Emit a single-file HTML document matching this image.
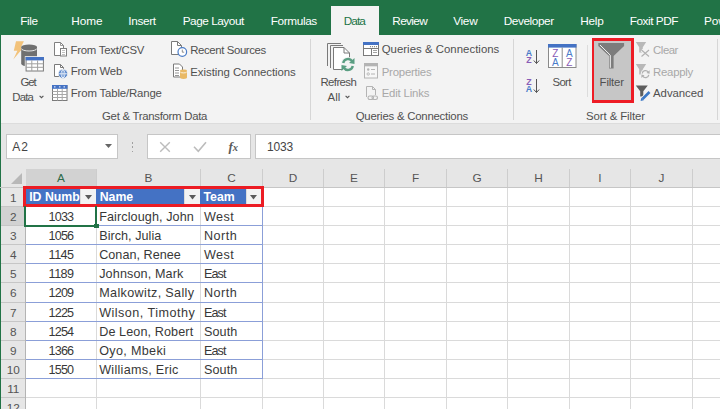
<!DOCTYPE html>
<html><head><meta charset="utf-8"><style>
html,body{margin:0;padding:0;width:720px;height:409px;overflow:hidden;background:#fff;}
body{position:relative;font-family:"Liberation Sans", sans-serif;}
body>div,body>svg{position:absolute;}
</style></head><body>
<div style="left:0px;top:0px;width:720px;height:35px;background:#217346;"></div>
<div style="left:331px;top:6px;width:48px;height:29px;background:#f3f3f3;"></div>
<div style="left:20.30px;top:16.00px;font-size:11.8px;line-height:11.8px;color:#fff;font-weight:normal;white-space:nowrap;letter-spacing:-0.437px;">File</div>
<div style="left:71.30px;top:16.00px;font-size:11.8px;line-height:11.8px;color:#fff;font-weight:normal;white-space:nowrap;letter-spacing:-0.094px;">Home</div>
<div style="left:128.30px;top:16.00px;font-size:11.8px;line-height:11.8px;color:#fff;font-weight:normal;white-space:nowrap;letter-spacing:-0.362px;">Insert</div>
<div style="left:182.70px;top:16.00px;font-size:11.8px;line-height:11.8px;color:#fff;font-weight:normal;white-space:nowrap;letter-spacing:-0.467px;">Page Layout</div>
<div style="left:270.70px;top:16.00px;font-size:11.8px;line-height:11.8px;color:#fff;font-weight:normal;white-space:nowrap;letter-spacing:-0.369px;">Formulas</div>
<div style="left:392.30px;top:16.00px;font-size:11.8px;line-height:11.8px;color:#fff;font-weight:normal;white-space:nowrap;letter-spacing:-0.666px;">Review</div>
<div style="left:453.20px;top:16.00px;font-size:11.8px;line-height:11.8px;color:#fff;font-weight:normal;white-space:nowrap;letter-spacing:-0.298px;">View</div>
<div style="left:503.70px;top:16.00px;font-size:11.8px;line-height:11.8px;color:#fff;font-weight:normal;white-space:nowrap;letter-spacing:-0.411px;">Developer</div>
<div style="left:580.20px;top:16.00px;font-size:11.8px;line-height:11.8px;color:#fff;font-weight:normal;white-space:nowrap;letter-spacing:-0.224px;">Help</div>
<div style="left:629.80px;top:16.00px;font-size:11.8px;line-height:11.8px;color:#fff;font-weight:normal;white-space:nowrap;letter-spacing:-0.481px;">Foxit PDF</div>
<div style="left:703.90px;top:16.00px;font-size:11.8px;line-height:11.8px;color:#fff;font-weight:normal;white-space:nowrap;">Pow</div>
<div style="left:343.80px;top:16.00px;font-size:11.8px;line-height:11.8px;color:#217346;font-weight:normal;white-space:nowrap;letter-spacing:-0.978px;">Data</div>
<div style="left:0px;top:35px;width:720px;height:88px;background:#f3f3f3;"></div>
<div style="left:0px;top:123px;width:720px;height:1px;background:#dcdcdc;"></div>
<div style="left:0px;top:124px;width:720px;height:63.5px;background:#e6e6e6;"></div>
<div style="left:0px;top:35px;width:1px;height:374px;background:#217346;"></div>
<div style="left:310px;top:39px;width:1px;height:80.5px;background:#d6d6d6;"></div>
<div style="left:513px;top:39px;width:1px;height:80.5px;background:#d6d6d6;"></div>
<div style="left:717px;top:39px;width:1px;height:80.5px;background:#d6d6d6;"></div>
<div style="left:587px;top:45px;width:1px;height:52px;background:#dcdcdc;"></div>
<div style="left:70.50px;top:45.00px;font-size:11.4px;line-height:11.4px;color:#505050;font-weight:normal;white-space:nowrap;letter-spacing:-0.265px;">From Text/CSV</div>
<div style="left:70.80px;top:66.00px;font-size:11.4px;line-height:11.4px;color:#505050;font-weight:normal;white-space:nowrap;letter-spacing:-0.214px;">From Web</div>
<div style="left:70.80px;top:88.00px;font-size:11.4px;line-height:11.4px;color:#505050;font-weight:normal;white-space:nowrap;letter-spacing:-0.158px;">From Table/Range</div>
<div style="left:190.30px;top:45.00px;font-size:11.4px;line-height:11.4px;color:#505050;font-weight:normal;white-space:nowrap;letter-spacing:-0.401px;">Recent Sources</div>
<div style="left:190.30px;top:67.00px;font-size:11.4px;line-height:11.4px;color:#505050;font-weight:normal;white-space:nowrap;letter-spacing:-0.045px;">Existing Connections</div>
<div style="left:20.50px;top:77.00px;font-size:11.4px;line-height:11.4px;color:#505050;font-weight:normal;white-space:nowrap;letter-spacing:-1.038px;">Get</div>
<div style="left:12.30px;top:92.00px;font-size:11.4px;line-height:11.4px;color:#505050;font-weight:normal;white-space:nowrap;letter-spacing:-0.829px;">Data</div>
<div style="left:102.00px;top:111.00px;font-size:11.4px;line-height:11.4px;color:#505050;font-weight:normal;white-space:nowrap;letter-spacing:-0.283px;">Get &amp; Transform Data</div>
<div style="left:320.50px;top:77.00px;font-size:11.4px;line-height:11.4px;color:#505050;font-weight:normal;white-space:nowrap;letter-spacing:-0.602px;">Refresh</div>
<div style="left:327.50px;top:92.00px;font-size:11.4px;line-height:11.4px;color:#505050;font-weight:normal;white-space:nowrap;letter-spacing:0.067px;">All</div>
<div style="left:381.70px;top:44.00px;font-size:11.4px;line-height:11.4px;color:#505050;font-weight:normal;white-space:nowrap;letter-spacing:0.024px;">Queries &amp; Connections</div>
<div style="left:381.70px;top:67.00px;font-size:11.4px;line-height:11.4px;color:#a8a8a8;font-weight:normal;white-space:nowrap;letter-spacing:-0.218px;">Properties</div>
<div style="left:381.70px;top:88.00px;font-size:11.4px;line-height:11.4px;color:#a8a8a8;font-weight:normal;white-space:nowrap;letter-spacing:-0.191px;">Edit Links</div>
<div style="left:355.70px;top:111.00px;font-size:11.4px;line-height:11.4px;color:#505050;font-weight:normal;white-space:nowrap;letter-spacing:-0.231px;">Queries &amp; Connections</div>
<div style="left:552.40px;top:77.00px;font-size:11.4px;line-height:11.4px;color:#505050;font-weight:normal;white-space:nowrap;letter-spacing:-0.603px;">Sort</div>
<div style="left:653.10px;top:45.00px;font-size:11.4px;line-height:11.4px;color:#a8a8a8;font-weight:normal;white-space:nowrap;letter-spacing:-0.487px;">Clear</div>
<div style="left:653.10px;top:67.00px;font-size:11.4px;line-height:11.4px;color:#a8a8a8;font-weight:normal;white-space:nowrap;letter-spacing:-0.288px;">Reapply</div>
<div style="left:653.10px;top:88.00px;font-size:11.4px;line-height:11.4px;color:#505050;font-weight:normal;white-space:nowrap;letter-spacing:-0.072px;">Advanced</div>
<div style="left:586.00px;top:111.00px;font-size:11.4px;line-height:11.4px;color:#505050;font-weight:normal;white-space:nowrap;letter-spacing:-0.082px;">Sort &amp; Filter</div>
<div style="left:592px;top:38px;width:42px;height:65px;background:#c6c6c6;box-sizing:border-box;border-style:solid;border-color:#ee1c25;border-width:3px 3px 3px 2px;"></div>
<div style="left:599.60px;top:77.00px;font-size:11.4px;line-height:11.4px;color:#505050;font-weight:normal;white-space:nowrap;letter-spacing:-0.166px;">Filter</div>
<div style="left:6px;top:134px;width:112px;height:25px;background:#fff;box-sizing:border-box;border:1px solid #c6c6c6;"></div>
<div style="left:12.30px;top:141.00px;font-size:12px;line-height:12px;color:#444;font-weight:normal;white-space:nowrap;letter-spacing:1.024px;">A2</div>
<div style="left:147px;top:134px;width:104px;height:25px;background:#fff;box-sizing:border-box;border:1px solid #c6c6c6;"></div>
<div style="left:255px;top:134px;width:475px;height:25px;background:#fff;box-sizing:border-box;border:1px solid #c6c6c6;"></div>
<div style="left:267.00px;top:141.00px;font-size:12px;line-height:12px;color:#444;font-weight:normal;white-space:nowrap;letter-spacing:-0.133px;">1033</div>
<div style="left:26px;top:188px;width:694px;height:221px;background:#fff;"></div>
<div style="left:1px;top:188px;width:24px;height:221px;background:#e6e6e6;"></div>
<div style="left:26px;top:168.7px;width:70px;height:18.30000000000001px;background:#d2d2d2;"></div>
<div style="left:1px;top:207px;width:24px;height:18px;background:#d2d2d2;"></div>
<div style="left:96px;top:169px;width:1px;height:18px;background:#cdcdcd;"></div>
<div style="left:96px;top:188px;width:1px;height:221px;background:#dadada;"></div>
<div style="left:200px;top:169px;width:1px;height:18px;background:#cdcdcd;"></div>
<div style="left:200px;top:188px;width:1px;height:221px;background:#dadada;"></div>
<div style="left:262px;top:169px;width:1px;height:18px;background:#cdcdcd;"></div>
<div style="left:262px;top:188px;width:1px;height:221px;background:#dadada;"></div>
<div style="left:323px;top:169px;width:1px;height:18px;background:#cdcdcd;"></div>
<div style="left:323px;top:188px;width:1px;height:221px;background:#dadada;"></div>
<div style="left:384px;top:169px;width:1px;height:18px;background:#cdcdcd;"></div>
<div style="left:384px;top:188px;width:1px;height:221px;background:#dadada;"></div>
<div style="left:446px;top:169px;width:1px;height:18px;background:#cdcdcd;"></div>
<div style="left:446px;top:188px;width:1px;height:221px;background:#dadada;"></div>
<div style="left:507px;top:169px;width:1px;height:18px;background:#cdcdcd;"></div>
<div style="left:507px;top:188px;width:1px;height:221px;background:#dadada;"></div>
<div style="left:569px;top:169px;width:1px;height:18px;background:#cdcdcd;"></div>
<div style="left:569px;top:188px;width:1px;height:221px;background:#dadada;"></div>
<div style="left:630px;top:169px;width:1px;height:18px;background:#cdcdcd;"></div>
<div style="left:630px;top:188px;width:1px;height:221px;background:#dadada;"></div>
<div style="left:692px;top:169px;width:1px;height:18px;background:#cdcdcd;"></div>
<div style="left:692px;top:188px;width:1px;height:221px;background:#dadada;"></div>
<div style="left:41.00px;top:173.00px;font-size:11.8px;line-height:11.8px;color:#2e6b4a;font-weight:normal;white-space:nowrap;width:40px;text-align:center;">A</div>
<div style="left:128.50px;top:173.00px;font-size:11.8px;line-height:11.8px;color:#555;font-weight:normal;white-space:nowrap;width:40px;text-align:center;">B</div>
<div style="left:211.50px;top:173.00px;font-size:11.8px;line-height:11.8px;color:#555;font-weight:normal;white-space:nowrap;width:40px;text-align:center;">C</div>
<div style="left:273.00px;top:173.00px;font-size:11.8px;line-height:11.8px;color:#555;font-weight:normal;white-space:nowrap;width:40px;text-align:center;">D</div>
<div style="left:334.00px;top:173.00px;font-size:11.8px;line-height:11.8px;color:#555;font-weight:normal;white-space:nowrap;width:40px;text-align:center;">E</div>
<div style="left:395.50px;top:173.00px;font-size:11.8px;line-height:11.8px;color:#555;font-weight:normal;white-space:nowrap;width:40px;text-align:center;">F</div>
<div style="left:457.00px;top:173.00px;font-size:11.8px;line-height:11.8px;color:#555;font-weight:normal;white-space:nowrap;width:40px;text-align:center;">G</div>
<div style="left:518.50px;top:173.00px;font-size:11.8px;line-height:11.8px;color:#555;font-weight:normal;white-space:nowrap;width:40px;text-align:center;">H</div>
<div style="left:580.00px;top:173.00px;font-size:11.8px;line-height:11.8px;color:#555;font-weight:normal;white-space:nowrap;width:40px;text-align:center;">I</div>
<div style="left:641.50px;top:173.00px;font-size:11.8px;line-height:11.8px;color:#555;font-weight:normal;white-space:nowrap;width:40px;text-align:center;">J</div>
<div style="left:0px;top:187px;width:720px;height:1px;background:#c6c6c6;"></div>
<div style="left:1px;top:206px;width:24px;height:1px;background:#c6c6c6;"></div>
<div style="left:26px;top:206px;width:694px;height:1px;background:#dadada;"></div>
<div style="left:1px;top:225px;width:24px;height:1px;background:#c6c6c6;"></div>
<div style="left:26px;top:225px;width:694px;height:1px;background:#dadada;"></div>
<div style="left:1px;top:244px;width:24px;height:1px;background:#c6c6c6;"></div>
<div style="left:26px;top:244px;width:694px;height:1px;background:#dadada;"></div>
<div style="left:1px;top:263px;width:24px;height:1px;background:#c6c6c6;"></div>
<div style="left:26px;top:263px;width:694px;height:1px;background:#dadada;"></div>
<div style="left:1px;top:282px;width:24px;height:1px;background:#c6c6c6;"></div>
<div style="left:26px;top:282px;width:694px;height:1px;background:#dadada;"></div>
<div style="left:1px;top:302px;width:24px;height:1px;background:#c6c6c6;"></div>
<div style="left:26px;top:302px;width:694px;height:1px;background:#dadada;"></div>
<div style="left:1px;top:321px;width:24px;height:1px;background:#c6c6c6;"></div>
<div style="left:26px;top:321px;width:694px;height:1px;background:#dadada;"></div>
<div style="left:1px;top:340px;width:24px;height:1px;background:#c6c6c6;"></div>
<div style="left:26px;top:340px;width:694px;height:1px;background:#dadada;"></div>
<div style="left:1px;top:359px;width:24px;height:1px;background:#c6c6c6;"></div>
<div style="left:26px;top:359px;width:694px;height:1px;background:#dadada;"></div>
<div style="left:1px;top:378px;width:24px;height:1px;background:#c6c6c6;"></div>
<div style="left:26px;top:378px;width:694px;height:1px;background:#dadada;"></div>
<div style="left:1px;top:397px;width:24px;height:1px;background:#c6c6c6;"></div>
<div style="left:26px;top:397px;width:694px;height:1px;background:#dadada;"></div>
<div style="left:1px;top:416px;width:24px;height:1px;background:#c6c6c6;"></div>
<div style="left:26px;top:416px;width:694px;height:1px;background:#dadada;"></div>
<div style="left:25px;top:188px;width:1px;height:221px;background:#b4b4b4;"></div>
<div style="left:1.00px;top:193.00px;font-size:11.8px;line-height:11.8px;color:#555;font-weight:normal;white-space:nowrap;width:24.5px;text-align:center;">1</div>
<div style="left:1.00px;top:212.00px;font-size:11.8px;line-height:11.8px;color:#555;font-weight:normal;white-space:nowrap;width:24.5px;text-align:center;">2</div>
<div style="left:1.00px;top:231.00px;font-size:11.8px;line-height:11.8px;color:#555;font-weight:normal;white-space:nowrap;width:24.5px;text-align:center;">3</div>
<div style="left:1.00px;top:250.00px;font-size:11.8px;line-height:11.8px;color:#555;font-weight:normal;white-space:nowrap;width:24.5px;text-align:center;">4</div>
<div style="left:1.00px;top:269.00px;font-size:11.8px;line-height:11.8px;color:#555;font-weight:normal;white-space:nowrap;width:24.5px;text-align:center;">5</div>
<div style="left:1.00px;top:288.00px;font-size:11.8px;line-height:11.8px;color:#555;font-weight:normal;white-space:nowrap;width:24.5px;text-align:center;">6</div>
<div style="left:1.00px;top:308.00px;font-size:11.8px;line-height:11.8px;color:#555;font-weight:normal;white-space:nowrap;width:24.5px;text-align:center;">7</div>
<div style="left:1.00px;top:327.00px;font-size:11.8px;line-height:11.8px;color:#555;font-weight:normal;white-space:nowrap;width:24.5px;text-align:center;">8</div>
<div style="left:1.00px;top:346.00px;font-size:11.8px;line-height:11.8px;color:#555;font-weight:normal;white-space:nowrap;width:24.5px;text-align:center;">9</div>
<div style="left:1.00px;top:365.00px;font-size:11.8px;line-height:11.8px;color:#555;font-weight:normal;white-space:nowrap;width:24.5px;text-align:center;">10</div>
<div style="left:1.00px;top:384.00px;font-size:11.8px;line-height:11.8px;color:#555;font-weight:normal;white-space:nowrap;width:24.5px;text-align:center;">11</div>
<div style="left:1.00px;top:403.00px;font-size:11.8px;line-height:11.8px;color:#555;font-weight:normal;white-space:nowrap;width:24.5px;text-align:center;">12</div>
<svg style="left:11px;top:172.5px;" width="11" height="11" viewBox="0 0 11 11"><polygon points="11,0 11,11 0,11" fill="#b8b8b8"/></svg>
<div style="left:26px;top:189px;width:235px;height:15px;background:#4472c4;"></div>
<div style="left:26px;top:225px;width:237px;height:1px;background:#8b9fd8;"></div>
<div style="left:26px;top:244px;width:237px;height:1px;background:#8b9fd8;"></div>
<div style="left:26px;top:263px;width:237px;height:1px;background:#8b9fd8;"></div>
<div style="left:26px;top:282px;width:237px;height:1px;background:#8b9fd8;"></div>
<div style="left:26px;top:302px;width:237px;height:1px;background:#8b9fd8;"></div>
<div style="left:26px;top:321px;width:237px;height:1px;background:#8b9fd8;"></div>
<div style="left:26px;top:340px;width:237px;height:1px;background:#8b9fd8;"></div>
<div style="left:26px;top:359px;width:237px;height:1px;background:#8b9fd8;"></div>
<div style="left:26px;top:378px;width:237px;height:1px;background:#8b9fd8;"></div>
<div style="left:262px;top:207px;width:1px;height:172px;background:#8b9fd8;"></div>
<div style="left:29.20px;top:191.00px;font-size:12.3px;line-height:12.3px;color:#fff;font-weight:bold;white-space:nowrap;">ID Numb</div>
<div style="left:99.70px;top:191.00px;font-size:12.3px;line-height:12.3px;color:#fff;font-weight:bold;white-space:nowrap;">Name</div>
<div style="left:203.50px;top:191.00px;font-size:12.3px;line-height:12.3px;color:#fff;font-weight:bold;white-space:nowrap;">Team</div>
<div style="left:80.3px;top:189px;width:15.5px;height:15px;background:#f3f3f3;box-sizing:border-box;border-left:1px solid #dcdcdc;"></div>
<svg style="left:84.8px;top:195px;" width="7" height="4.5" viewBox="0 0 7 4.5"><polygon points="0,0 7,0 3.5,4.5" fill="#5a5a5a"/></svg>
<div style="left:184.3px;top:189px;width:15.5px;height:15px;background:#f3f3f3;box-sizing:border-box;border-left:1px solid #dcdcdc;"></div>
<svg style="left:188.8px;top:195px;" width="7" height="4.5" viewBox="0 0 7 4.5"><polygon points="0,0 7,0 3.5,4.5" fill="#5a5a5a"/></svg>
<div style="left:245.7px;top:189px;width:15.5px;height:15px;background:#f3f3f3;box-sizing:border-box;border-left:1px solid #dcdcdc;"></div>
<svg style="left:250.2px;top:195px;" width="7" height="4.5" viewBox="0 0 7 4.5"><polygon points="0,0 7,0 3.5,4.5" fill="#5a5a5a"/></svg>
<div style="left:23px;top:186px;width:241px;height:21px;background:transparent;box-sizing:border-box;border:3px solid #ec1c24;"></div>
<div style="left:48.60px;top:211.00px;font-size:12.6px;line-height:12.6px;color:#383838;font-weight:normal;white-space:nowrap;letter-spacing:-0.845px;">1033</div>
<div style="left:99.20px;top:211.00px;font-size:12.6px;line-height:12.6px;color:#383838;font-weight:normal;white-space:nowrap;letter-spacing:0.103px;">Fairclough, John</div>
<div style="left:203.90px;top:211.00px;font-size:12.6px;line-height:12.6px;color:#383838;font-weight:normal;white-space:nowrap;letter-spacing:0.475px;">West</div>
<div style="left:48.60px;top:230.00px;font-size:12.6px;line-height:12.6px;color:#383838;font-weight:normal;white-space:nowrap;letter-spacing:-0.845px;">1056</div>
<div style="left:99.20px;top:230.00px;font-size:12.6px;line-height:12.6px;color:#383838;font-weight:normal;white-space:nowrap;letter-spacing:0.042px;">Birch, Julia</div>
<div style="left:203.90px;top:230.00px;font-size:12.6px;line-height:12.6px;color:#383838;font-weight:normal;white-space:nowrap;letter-spacing:0.548px;">North</div>
<div style="left:48.60px;top:249.00px;font-size:12.6px;line-height:12.6px;color:#383838;font-weight:normal;white-space:nowrap;letter-spacing:-0.530px;">1145</div>
<div style="left:99.20px;top:249.00px;font-size:12.6px;line-height:12.6px;color:#383838;font-weight:normal;white-space:nowrap;letter-spacing:0.040px;">Conan, Renee</div>
<div style="left:203.90px;top:249.00px;font-size:12.6px;line-height:12.6px;color:#383838;font-weight:normal;white-space:nowrap;letter-spacing:0.475px;">West</div>
<div style="left:48.60px;top:268.00px;font-size:12.6px;line-height:12.6px;color:#383838;font-weight:normal;white-space:nowrap;letter-spacing:-0.530px;">1189</div>
<div style="left:99.20px;top:268.00px;font-size:12.6px;line-height:12.6px;color:#383838;font-weight:normal;white-space:nowrap;letter-spacing:0.128px;">Johnson, Mark</div>
<div style="left:203.90px;top:268.00px;font-size:12.6px;line-height:12.6px;color:#383838;font-weight:normal;white-space:nowrap;letter-spacing:-0.904px;">East</div>
<div style="left:48.60px;top:287.00px;font-size:12.6px;line-height:12.6px;color:#383838;font-weight:normal;white-space:nowrap;letter-spacing:-0.845px;">1209</div>
<div style="left:99.20px;top:287.00px;font-size:12.6px;line-height:12.6px;color:#383838;font-weight:normal;white-space:nowrap;letter-spacing:0.352px;">Malkowitz, Sally</div>
<div style="left:203.90px;top:287.00px;font-size:12.6px;line-height:12.6px;color:#383838;font-weight:normal;white-space:nowrap;letter-spacing:0.548px;">North</div>
<div style="left:48.60px;top:307.00px;font-size:12.6px;line-height:12.6px;color:#383838;font-weight:normal;white-space:nowrap;letter-spacing:-0.845px;">1225</div>
<div style="left:99.20px;top:307.00px;font-size:12.6px;line-height:12.6px;color:#383838;font-weight:normal;white-space:nowrap;letter-spacing:0.477px;">Wilson, Timothy</div>
<div style="left:203.90px;top:307.00px;font-size:12.6px;line-height:12.6px;color:#383838;font-weight:normal;white-space:nowrap;letter-spacing:-0.904px;">East</div>
<div style="left:48.60px;top:326.00px;font-size:12.6px;line-height:12.6px;color:#383838;font-weight:normal;white-space:nowrap;letter-spacing:-0.845px;">1254</div>
<div style="left:99.20px;top:326.00px;font-size:12.6px;line-height:12.6px;color:#383838;font-weight:normal;white-space:nowrap;letter-spacing:0.110px;">De Leon, Robert</div>
<div style="left:203.90px;top:326.00px;font-size:12.6px;line-height:12.6px;color:#383838;font-weight:normal;white-space:nowrap;letter-spacing:0.119px;">South</div>
<div style="left:48.60px;top:345.00px;font-size:12.6px;line-height:12.6px;color:#383838;font-weight:normal;white-space:nowrap;letter-spacing:-0.845px;">1366</div>
<div style="left:99.20px;top:345.00px;font-size:12.6px;line-height:12.6px;color:#383838;font-weight:normal;white-space:nowrap;letter-spacing:0.331px;">Oyo, Mbeki</div>
<div style="left:203.90px;top:345.00px;font-size:12.6px;line-height:12.6px;color:#383838;font-weight:normal;white-space:nowrap;letter-spacing:-0.904px;">East</div>
<div style="left:48.60px;top:364.00px;font-size:12.6px;line-height:12.6px;color:#383838;font-weight:normal;white-space:nowrap;letter-spacing:-0.845px;">1550</div>
<div style="left:99.20px;top:364.00px;font-size:12.6px;line-height:12.6px;color:#383838;font-weight:normal;white-space:nowrap;letter-spacing:0.277px;">Williams, Eric</div>
<div style="left:203.90px;top:364.00px;font-size:12.6px;line-height:12.6px;color:#383838;font-weight:normal;white-space:nowrap;letter-spacing:0.119px;">South</div>
<div style="left:24px;top:206px;width:73px;height:21px;background:transparent;box-sizing:border-box;border:2px solid #217346;border-top:none;"></div>
<div style="left:94px;top:224px;width:5px;height:4px;background:#217346;"></div>
<svg style="left:104.5px;top:143.5px;" width="7" height="4" viewBox="0 0 7 4"><polygon points="0,0 7,0 3.5,4" fill="#666"/></svg>
<div style="left:131.5px;top:142px;width:1.5px;height:1.5px;background:#a0a0a0;"></div>
<div style="left:131.5px;top:146.3px;width:1.5px;height:1.5px;background:#a0a0a0;"></div>
<div style="left:131.5px;top:150.6px;width:1.5px;height:1.5px;background:#a0a0a0;"></div>
<svg style="left:159px;top:141px;" width="12" height="12" viewBox="0 0 12 12"><path d="M1.2,1.2 L10.8,10.8 M10.8,1.2 L1.2,10.8" stroke="#bcbcbc" stroke-width="1.4" fill="none"/></svg>
<svg style="left:193px;top:141px;" width="14" height="12" viewBox="0 0 14 12"><path d="M1,5.8 L5.3,10.2 L13,1.2" stroke="#bcbcbc" stroke-width="1.6" fill="none"/></svg>
<div style="left:228.5px;top:140px;font-family:'Liberation Serif',serif;font-style:italic;font-weight:bold;font-size:13px;line-height:13px;color:#5a5a5a;white-space:nowrap;">f<span style="font-size:10.5px;">x</span></div>
<svg style="left:10px;top:38px;" width="38" height="38" viewBox="0 0 38 38"><polygon points="6,3.3 13.9,3.3 10.8,9.6 13.2,9.8 3.3,21.4 7.4,12.8 3.8,12.8" fill="#f2c27a"/><path d="M11.2,9 A7.9,2.6 0 0 1 27,9 L27,25.8 A7.9,2.6 0 0 1 11.2,25.8 Z" fill="#707070"/><path d="M11.5,10.6 A7.6,2.4 0 0 0 26.7,10.6" stroke="#e8e8e8" stroke-width="1" fill="none"/><rect x="14.8" y="18.2" width="20" height="16.2" fill="#f3f3f3"/><rect x="16.1" y="19.5" width="17.3" height="13.5" fill="#fff" stroke="#7a7a7a" stroke-width="1"/><rect x="15.6" y="19" width="18.3" height="3.4" fill="#4472c4"/><path d="M21.8,22.4 V33 M27.6,22.4 V33 M16.1,25.8 H33.4 M16.1,29.3 H33.4" stroke="#a0a0a0" stroke-width="1"/></svg>
<svg style="left:53px;top:41px;" width="15" height="17" viewBox="0 0 15 17"><path d="M1.5,1.5 H7.5 L10.5,4.5 V14.5 H1.5 Z" fill="#fff" stroke="#808080" stroke-width="1"/><path d="M7.5,1.5 V4.5 H10.5" fill="none" stroke="#808080" stroke-width="0.8"/><rect x="7.5" y="7.5" width="6" height="7.5" fill="#fff" stroke="#808080" stroke-width="1"/><path d="M9,9.5 H12 M9,11.5 H12 M9,13.5 H12" stroke="#b0b0b0" stroke-width="0.8"/></svg>
<svg style="left:53px;top:63px;" width="16" height="16" viewBox="0 0 16 16"><path d="M1.5,1.5 H7.5 L10.5,4.5 V13.5 H1.5 Z" fill="#fff" stroke="#7a7a7a" stroke-width="1"/><path d="M7.5,1.5 V4.5 H10.5" fill="none" stroke="#7a7a7a" stroke-width="1"/><circle cx="10" cy="10.8" r="4.6" fill="#4a7cc7" stroke="#f3f3f3" stroke-width="0.8"/><path d="M5.8,10.8 H14.2 M10,6.5 V15" stroke="#fff" stroke-width="0.8"/><ellipse cx="10" cy="10.8" rx="2" ry="4" fill="none" stroke="#fff" stroke-width="0.8"/></svg>
<svg style="left:51px;top:84px;" width="17" height="17" viewBox="0 0 17 17"><rect x="1.5" y="1.5" width="14.5" height="15" fill="#fff" stroke="#7a7a7a" stroke-width="1"/><rect x="1" y="1" width="15.5" height="3.8" fill="#4472c4"/><path d="M3,2.9 h1.5 M8,2.9 h1.5 M12.5,2.9 h1.5" stroke="#fff" stroke-width="1"/><path d="M6.5,5 V16.5 M11.2,5 V16.5 M1.5,7.5 H16 M1.5,10.5 H16 M1.5,13.5 H16" stroke="#a8a8a8" stroke-width="1"/></svg>
<svg style="left:170px;top:40px;" width="19" height="18" viewBox="0 0 19 18"><path d="M1.5,1.5 H7.5 L11.5,5.5 V14.5 H1.5 Z" fill="#fff" stroke="#7a7a7a" stroke-width="1"/><path d="M7.5,1.5 V5.5 H11.5" fill="none" stroke="#7a7a7a" stroke-width="1"/><circle cx="12.3" cy="12" r="4.3" fill="#fff" stroke="#4a7cc7" stroke-width="1.2"/><path d="M12.3,9.6 V12.2 H14.2" stroke="#666" stroke-width="0.7" fill="none"/></svg>
<svg style="left:172px;top:63px;" width="17" height="17" viewBox="0 0 17 17"><path d="M1.5,1 H7.5 L10.5,4 V14 H1.5 Z" fill="#fff" stroke="#7a7a7a" stroke-width="1"/><path d="M3,5 H7 M3,7.5 H7 M3,10 H7 M3,12.5 H7" stroke="#8a8a8a" stroke-width="0.9"/><path d="M8,8 A3.5,1.4 0 0 1 15,8 V14.5 A3.5,1.4 0 0 1 8,14.5 Z" fill="#e9b965"/><path d="M8.3,9 A3.3,1.2 0 0 0 14.7,9" stroke="#fff" stroke-width="0.8" fill="none"/></svg>
<svg style="left:325px;top:41px;" width="33" height="32" viewBox="0 0 33 32"><path d="M2.5,25 V2.5 H16" fill="none" stroke="#7a7a7a" stroke-width="1"/><path d="M5.5,27 V4.5 H18" fill="none" stroke="#7a7a7a" stroke-width="1"/><path d="M8.5,28.5 V6.5 H19 L24.5,12 V28.5 Z" fill="#fff" stroke="#7a7a7a" stroke-width="1"/><path d="M19,6.5 V12 H24.5" fill="none" stroke="#7a7a7a" stroke-width="1"/><circle cx="23" cy="23.5" r="7.5" fill="#f3f3f3"/><path d="M18.2,22 A5,5 0 0 1 27.2,20.2" stroke="#5a9e82" stroke-width="2.4" fill="none"/><polygon points="29.5,17 29.5,23 24,22" fill="#5a9e82"/><path d="M27.8,25 A5,5 0 0 1 18.8,26.8" stroke="#5a9e82" stroke-width="2.4" fill="none"/><polygon points="16.5,30 16.5,24 22,25" fill="#5a9e82"/></svg>
<svg style="left:362px;top:41px;" width="18" height="16" viewBox="0 0 18 16"><rect x="1.5" y="1.5" width="15" height="13" fill="#fff" stroke="#7a7a7a" stroke-width="1"/><rect x="1" y="1" width="16" height="3" fill="#4472c4"/><path d="M1.5,7.5 H16.5 M9.5,7.5 V14.5" stroke="#7a7a7a" stroke-width="1"/><circle cx="8.5" cy="5.7" r="0.6" fill="#7a7a7a"/><circle cx="10.5" cy="5.7" r="0.6" fill="#7a7a7a"/><circle cx="12.5" cy="5.7" r="0.6" fill="#7a7a7a"/><circle cx="14.5" cy="5.7" r="0.6" fill="#7a7a7a"/><path d="M11,9.5 H15 M11,11.5 H15" stroke="#8a8a8a" stroke-width="0.8"/></svg>
<svg style="left:363px;top:62px;" width="16" height="17" viewBox="0 0 16 17"><rect x="1.5" y="1.5" width="13" height="14.5" fill="#f7f7f7" stroke="#b4b4b4" stroke-width="1"/><rect x="1" y="1" width="14" height="3.3" fill="#b4b4b4"/><circle cx="5.2" cy="7.5" r="1.2" fill="#b4b4b4"/><circle cx="5.2" cy="12" r="1.2" fill="none" stroke="#b4b4b4" stroke-width="0.9"/><path d="M8,7.5 H12 M8,12 H12" stroke="#b4b4b4" stroke-width="1"/></svg>
<svg style="left:365px;top:85px;" width="15" height="16" viewBox="0 0 15 16"><path d="M1.5,12 V1.5 H7.5 L10.5,4.5 V10" fill="none" stroke="#b4b4b4" stroke-width="1"/><path d="M7.5,1.5 V4.5 H10.5" fill="none" stroke="#b4b4b4" stroke-width="1"/><rect x="3" y="11" width="5.5" height="3.5" rx="1.7" fill="none" stroke="#b4b4b4" stroke-width="1.1"/><rect x="7" y="11" width="5.5" height="3.5" rx="1.7" fill="none" stroke="#b4b4b4" stroke-width="1.1"/></svg>
<svg style="left:524px;top:48.5px;" width="17" height="16" viewBox="0 0 17 16"><text x="5" y="6.8" font-family="Liberation Sans" font-size="8.8" font-weight="bold" fill="#4a7cc9" text-anchor="middle">A</text><text x="5" y="14" font-family="Liberation Sans" font-size="8.8" font-weight="bold" fill="#8a5cb6" text-anchor="middle">Z</text><path d="M12.5,1 V14.5 M9.8,11.5 L12.5,14.5 L15.2,11.5" stroke="#555" stroke-width="1" fill="none"/></svg>
<svg style="left:524px;top:77.5px;" width="17" height="16" viewBox="0 0 17 16"><text x="5" y="6.8" font-family="Liberation Sans" font-size="8.8" font-weight="bold" fill="#8a5cb6" text-anchor="middle">Z</text><text x="5" y="14" font-family="Liberation Sans" font-size="8.8" font-weight="bold" fill="#4a7cc9" text-anchor="middle">A</text><path d="M12.5,1 V14.5 M9.8,11.5 L12.5,14.5 L15.2,11.5" stroke="#555" stroke-width="1" fill="none"/></svg>
<svg style="left:548px;top:44px;" width="29" height="25" viewBox="0 0 29 25"><rect x="0.5" y="0.5" width="27.5" height="23" fill="#fff" stroke="#8a8a8a" stroke-width="1"/><rect x="0" y="0" width="28.5" height="3.6" fill="#4472c4"/><path d="M14.2,3.5 V23.5" stroke="#8a8a8a" stroke-width="1"/><text x="7.3" y="12.6" font-family="Liberation Sans" font-size="10" fill="#8a5cb6" text-anchor="middle">Z</text><text x="7.3" y="21.8" font-family="Liberation Sans" font-size="10" fill="#4a7cc9" text-anchor="middle">A</text><text x="21.3" y="12.6" font-family="Liberation Sans" font-size="10" fill="#4a7cc9" text-anchor="middle">A</text><text x="21.3" y="21.8" font-family="Liberation Sans" font-size="10" fill="#8a5cb6" text-anchor="middle">Z</text></svg>
<svg style="left:597px;top:42px;" width="28" height="28" viewBox="0 0 28 28"><polygon points="1.3,1.1 27.1,1.1 27.1,3.9 16.6,14 16.6,26.6 12.1,26.6 12.1,14 1.3,3.9" fill="#7c7c7c"/><path d="M3,3 L13.3,13.2 V25.8" stroke="#f4f4f4" stroke-width="1" fill="none"/></svg>
<svg style="left:635px;top:41px;" width="16" height="17" viewBox="0 0 16 17"><polygon points="0.8,1 11.2,1 7.8,6.3 7.8,11.5 4.2,11.5 4.2,6.3" fill="#b8b8b8"/><path d="M6.5,9 L14,15.5 M14,9 L6.5,15.5" stroke="#f3f3f3" stroke-width="3"/><path d="M6.5,9 L14,15.5 M14,9 L6.5,15.5" stroke="#b0b0b0" stroke-width="1.1"/></svg>
<svg style="left:635px;top:63px;" width="16" height="17" viewBox="0 0 16 17"><polygon points="0.8,1 11.2,1 7.8,6.3 7.8,11.5 4.2,11.5 4.2,6.3" fill="#b8b8b8"/><circle cx="10.5" cy="11" r="4.8" fill="#f3f3f3"/><path d="M7.2,10.5 A3.3,3.3 0 0 1 13.3,9.2 M13.8,11.8 A3.3,3.3 0 0 1 7.7,13" stroke="#b0b0b0" stroke-width="1.2" fill="none"/><polygon points="14.6,7.2 14.6,10.8 11.5,10" fill="#b0b0b0"/><polygon points="6.4,15 6.4,11.4 9.5,12.2" fill="#b0b0b0"/></svg>
<svg style="left:635px;top:84px;" width="17" height="18" viewBox="0 0 17 18"><polygon points="0.8,1.5 12.8,1.5 8.3,7.3 8.3,12.5 5.2,12.5 5.2,7.3" fill="#5e5e5e"/><path d="M7,15.5 L14.5,8" stroke="#f3f3f3" stroke-width="4.5"/><path d="M7.5,15 L14.5,8" stroke="#3b78c6" stroke-width="2.6"/><polygon points="5.6,17 6.3,13.8 8.8,16.3" fill="#3b78c6"/></svg>
<svg style="left:39px;top:94.5px;" width="5" height="4" viewBox="0 0 5 4"><path d="M0.6,0.8 L2.5,2.7 L4.4,0.8" stroke="#555" stroke-width="1.1" fill="none"/></svg>
<svg style="left:344.5px;top:94.5px;" width="5" height="4" viewBox="0 0 5 4"><path d="M0.6,0.8 L2.5,2.7 L4.4,0.8" stroke="#555" stroke-width="1.1" fill="none"/></svg>
</body></html>
